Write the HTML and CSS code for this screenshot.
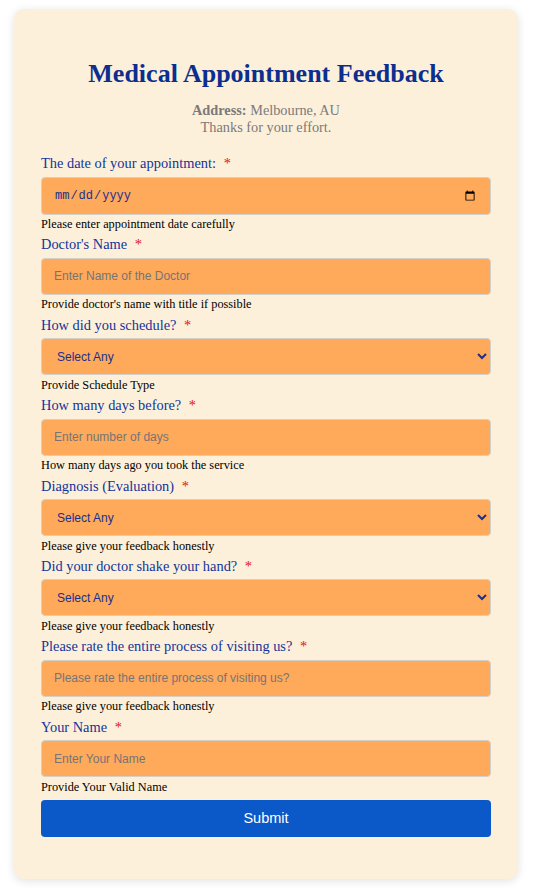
FILE: index.html
```html
<!DOCTYPE html>
<html lang="en">
<head>
<meta charset="utf-8">
<title>Medical Appointment Feedback</title>
<link rel="stylesheet" href="styles.css">
</head>
<body>
<div class="card">
  <h2 class="title">Medical Appointment Feedback</h2>
  <p class="subtitle"><b>Address:</b> Melbourne, AU<br>Thanks for your effort.</p>
  <form class="form">
    <div class="field">
      <label class="label">The date of your appointment: <span class="req">*</span></label>
      <input class="control control-date" type="date">
      <div class="help">Please enter appointment date carefully</div>
    </div>
    <div class="field">
      <label class="label">Doctor's Name <span class="req">*</span></label>
      <input class="control" type="text" placeholder="Enter Name of the Doctor">
      <div class="help">Provide doctor's name with title if possible</div>
    </div>
    <div class="field">
      <label class="label">How did you schedule? <span class="req">*</span></label>
      <select class="control control-select"><option>Select Any</option></select>
      <div class="help">Provide Schedule Type</div>
    </div>
    <div class="field">
      <label class="label">How many days before? <span class="req">*</span></label>
      <input class="control" type="text" placeholder="Enter number of days">
      <div class="help">How many days ago you took the service</div>
    </div>
    <div class="field">
      <label class="label">Diagnosis (Evaluation) <span class="req">*</span></label>
      <select class="control control-select"><option>Select Any</option></select>
      <div class="help">Please give your feedback honestly</div>
    </div>
    <div class="field">
      <label class="label">Did your doctor shake your hand? <span class="req">*</span></label>
      <select class="control control-select"><option>Select Any</option></select>
      <div class="help">Please give your feedback honestly</div>
    </div>
    <div class="field">
      <label class="label">Please rate the entire process of visiting us? <span class="req">*</span></label>
      <input class="control" type="text" placeholder="Please rate the entire process of visiting us?">
      <div class="help">Please give your feedback honestly</div>
    </div>
    <div class="field field-last">
      <label class="label">Your Name <span class="req">*</span></label>
      <input class="control" type="text" placeholder="Enter Your Name">
      <div class="help">Provide Your Valid Name</div>
    </div>
    <button class="submit" type="button">Submit</button>
  </form>
</div>
</body>
</html>
```
FILE: styles.css
```css
html, body {
  margin: 0;
  padding: 0;
  background: #ffffff;
}
body {
  padding: 9px 14px 20px 14px;
  font-family: "Liberation Serif", "Times New Roman", serif;
}
.card {
  width: 504px;
  box-sizing: border-box;
  background: #fdf0da;
  border-radius: 10px;
  box-shadow: 0 2px 10px rgba(0, 0, 0, 0.12);
  padding: 50px 27px 42px 27px;
}
.title {
  margin: 0;
  text-align: center;
  font-size: 26px;
  font-weight: bold;
  color: #0b2e8f;
  line-height: 30px;
}
.subtitle {
  margin: 13px 0 20px 0;
  text-align: center;
  font-size: 14.3px;
  color: #7a7a7a;
  line-height: 16.5px;
}
.form {
  display: flex;
  flex-direction: column;
}
.field {
  display: flex;
  flex-direction: column;
  margin-bottom: 5.4px;
}
.field-last {
  margin-bottom: 6px;
}
.label {
  font-size: 14.4px;
  line-height: 16.5px;
  color: #12349a;
  margin-bottom: 5px;
}
.req {
  color: #e01010;
  margin-left: 4px;
}
.control {
  box-sizing: border-box;
  width: 100%;
  height: 37px;
  margin: 0;
  padding: 0 12px;
  border: 1px solid #d4d0c8;
  border-radius: 4px;
  background: #ffa95b;
  font-family: "Liberation Sans", Arial, sans-serif;
  font-size: 12px;
  color: #1a2f8f;
}
.control::placeholder {
  color: #757575;
}
.control-date {
  height: 38px;
  font-family: "Liberation Mono", monospace;
}
.control-select {
  padding-left: 11px;
}
.help {
  margin-top: 2.5px;
  font-size: 12.3px;
  line-height: 14px;
  color: #000000;
}
.submit {
  width: 100%;
  height: 37px;
  border: none;
  border-radius: 4px;
  background: #0b58c9;
  color: #ffffff;
  font-family: "Liberation Sans", Arial, sans-serif;
  font-size: 14.5px;
  cursor: pointer;
}
```
